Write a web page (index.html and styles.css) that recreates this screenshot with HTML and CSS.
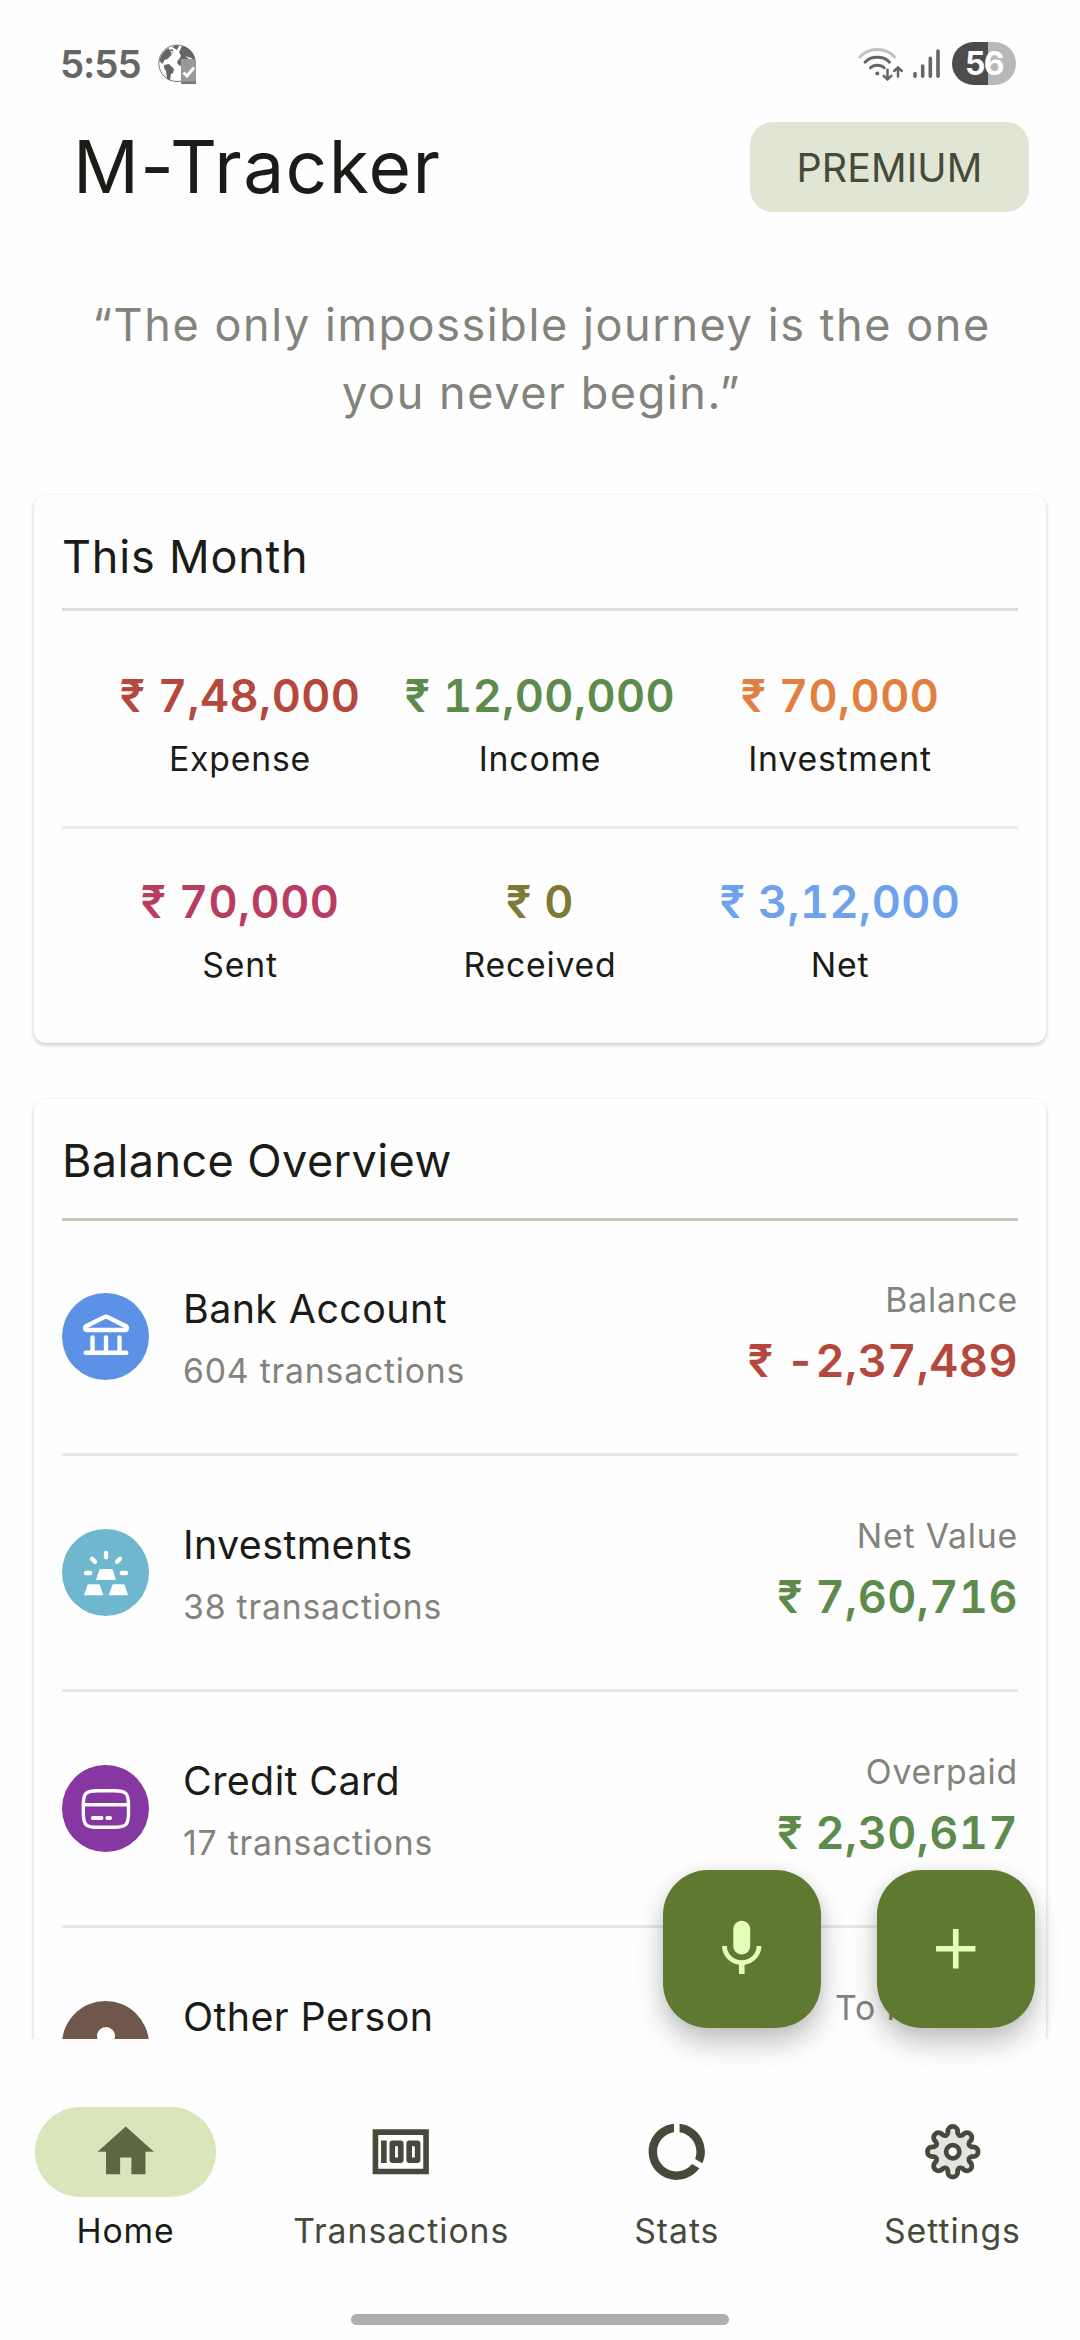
FILE: index.html
```html
<!DOCTYPE html>
<html lang="en">
<head>
    <meta charset="utf-8">
    <title>M-Tracker</title>
    <link rel="stylesheet" href="styles.css">
</head>
<body>
    <div class="screen">
        <div class="content">
            <div class="status-bar">
                <span class="time">5:55</span>
                <svg class="globe" width="40" height="40" viewBox="0 0 40 40">
                    <circle cx="19" cy="19.3" r="18.2" fill="#fefefe" stroke="#777" stroke-width="1"/>
                    <path fill="#666" d="M1.5 17c1-6 5-11 9-13l1 2 3-1 1 3-2 1v2l-4 4-3 1-2 4zM14 3l4-2 3 1-2 4-3-2zM21 8l3-6c6 1 11 5 13 12v4h-9l-8 2v-3l3-5zM6 21l5-1 5 5-1 4-2 1-1 6-3-1-1-8-2-3z"/>
                    <path fill="#666" d="M20 16l4-1 1 6-3 1-3-3z"/>
                    <path fill="#fefefe" d="M27 12l6 2 3 2-5-1zM12 7l3 0-1 2z"/>
                    <path fill="#999" d="M23 15h15v25H23z"/>
                    <path fill="#777" d="M23 37.5h15V40H23z"/>
                    <path fill="none" stroke="#fff" stroke-width="3" d="M25.5 28.5l3.5 3.5 7-8.5"/>
                </svg>
                <svg class="wifi" width="46" height="34" viewBox="0 0 46 34" fill="none" stroke="#666" stroke-width="3" stroke-linecap="round">
                    <path stroke="#c2c2c2" d="M2 10Q8.5 2.5 19.3 2.5T36.5 10"/>
                    <path d="M7 15.2Q11.5 10.3 19.3 10.3T31.5 15.2"/>
                    <path d="M12.4 20.8Q15 18.2 19.3 18.2T26.2 20.8"/>
                    <circle cx="19.3" cy="26.4" r="2" fill="#666" stroke="none"/>
                    <path stroke-width="2.5" d="M29.5 22.8v9.6M25.7 28.8l3.8 3.6 3.8-3.6M40 29.6v-9M36.2 24l3.8-3.6 3.8 3.6"/>
                </svg>
                <svg class="signal" width="28" height="30" viewBox="0 0 28 30" stroke="#666" stroke-width="3.6" stroke-linecap="round">
                    <path d="M2 24.5v2.7M9.7 17v10.2M17.3 9.2v18M25 2v25.2"/>
                </svg>
                <span class="battery">56</span>
            </div>

            <div class="header">
                <h1>M-Tracker</h1>
                <button class="premium">PREMIUM</button>
            </div>

            <p class="quote">“The only impossible journey is the one<br>you never begin.”</p>

            <div class="card month">
                <h2>This Month</h2>
                <div class="stats">
                    <div class="stat"><b class="red">₹ 7,48,000</b><span>Expense</span></div>
                    <div class="stat"><b class="green">₹ 12,00,000</b><span>Income</span></div>
                    <div class="stat"><b class="orange">₹ 70,000</b><span>Investment</span></div>
                </div>
                <div class="stats second">
                    <div class="stat"><b class="pink">₹ 70,000</b><span>Sent</span></div>
                    <div class="stat"><b class="olive">₹ 0</b><span>Received</span></div>
                    <div class="stat"><b class="blue">₹ 3,12,000</b><span>Net</span></div>
                </div>
            </div>

            <div class="card balance">
                <h2>Balance Overview</h2>
                <div class="account">
                    <svg class="account-icon bank" viewBox="0 0 87 87" fill="none" stroke="#fff" stroke-width="4.4" stroke-linecap="round" stroke-linejoin="round">
                        <path d="M25 37C22.6 37 22.6 34 24.6 33L42.3 24.1Q44 23.2 45.7 24.1L63.4 33C65.4 34 65.4 37 63 37Z"/>
                        <path d="M30.5 44.5v15M44 44.5v15M57.5 44.5v15M23.7 59.7h40.6"/>
                    </svg>
                    <div class="account-text">
                        <span class="name">Bank Account</span>
                        <span class="sub">604 transactions</span>
                    </div>
                    <div class="account-value">
                        <span class="sub">Balance</span>
                        <b class="red">₹ -2,37,489</b>
                    </div>
                </div>
                <div class="account">
                    <svg class="account-icon invest" viewBox="0 0 87 87" fill="#fff" stroke-linecap="round">
                        <path d="M38.6 40h11q1 0 1.3 1L54 50.9H34L37.3 41q.3-1 1.3-1zM26.7 55.3h10q1 0 1.3 1L41.3 66.2H22L25.4 56.3q.3-1 1.3-1zM51.5 55.3h10q1 0 1.3 1L66.1 66.2H46.8L50.2 56.3q.3-1 1.3-1z"/>
                        <path fill="none" stroke="#fff" stroke-width="4.4" d="M24 44h4.2M59.8 44H64M44 24v4.2M30 29.8l2.9 3M58 29.8l-2.9 3"/>
                    </svg>
                    <div class="account-text">
                        <span class="name">Investments</span>
                        <span class="sub">38 transactions</span>
                    </div>
                    <div class="account-value">
                        <span class="sub">Net Value</span>
                        <b class="green">₹ 7,60,716</b>
                    </div>
                </div>
                <div class="account">
                    <svg class="account-icon credit" viewBox="0 0 87 87" fill="none" stroke="#fff" stroke-width="3.4" stroke-linecap="round">
                        <path d="M21.3 40C21.3 28 24 25.7 36 25.7H52C64 25.7 66.5 28 66.5 40V48C66.5 60 64 62.3 52 62.3H36C24 62.3 21.3 60 21.3 48ZM22 39.7H66"/>
                        <path stroke-width="3.8" d="M30.8 53h8.8M45.3 53h2.8"/>
                    </svg>
                    <div class="account-text">
                        <span class="name">Credit Card</span>
                        <span class="sub">17 transactions</span>
                    </div>
                    <div class="account-value">
                        <span class="sub">Overpaid</span>
                        <b class="green">₹ 2,30,617</b>
                    </div>
                </div>
                <div class="account">
                    <svg class="account-icon person" viewBox="0 0 87 87" fill="#fff">
                        <circle cx="44" cy="35" r="9"/>
                        <path d="M26 62c0-8 8-13 18-13s18 5 18 13z"/>
                    </svg>
                    <div class="account-text">
                        <span class="name">Other Person</span>
                    </div>
                    <div class="account-value">
                        <span class="sub">To Receive</span>
                    </div>
                </div>
            </div>
        </div>

        <div class="fabs">
            <button class="fab">
                <svg class="icon" viewBox="0 0 24 24"><path d="M12 14c1.66 0 2.99-1.34 2.99-3L15 5c0-1.66-1.34-3-3-3S9 3.34 9 5v6c0 1.66 1.34 3 3 3zm5.3-3c0 3-2.54 5.1-5.3 5.1S6.7 14 6.7 11H5c0 3.41 2.72 6.23 6 6.72V21h2v-3.28c3.28-.48 6-3.3 6-6.72h-1.7z"/></svg>
            </button>
            <button class="fab">
                <svg class="icon" viewBox="0 0 24 24"><path d="M19 13h-6v6h-2v-6H5v-2h6V5h2v6h6z"/></svg>
            </button>
        </div>

        <div class="nav">
            <div class="nav-item active">
                <div class="pill"><svg class="icon" viewBox="0 0 24 24"><path d="M10 20v-6h4v6h5v-8h3L12 3 2 12h3v8z"/></svg></div>
                <span>Home</span>
            </div>
            <div class="nav-item">
                <div class="pill"><svg class="icon" viewBox="0 0 24 24"><path d="M15 16h3c.55 0 1-.45 1-1V9c0-.55-.45-1-1-1h-3c-.55 0-1 .45-1 1v6c0 .55.45 1 1 1zm1-6h1v4h-1v-4zm-7 6h3c.55 0 1-.45 1-1V9c0-.55-.45-1-1-1H9c-.55 0-1 .45-1 1v6c0 .55.45 1 1 1zm1-6h1v4h-1v-4zM5 8h2v8H5zM2 4v16h20V4H2zm18 14H4V6h16v12z"/></svg></div>
                <span>Transactions</span>
            </div>
            <div class="nav-item">
                <div class="pill"><svg class="icon" viewBox="0 0 24 24"><path d="M13 2.05v3.03c3.39.49 6 3.39 6 6.92 0 .9-.18 1.75-.48 2.54l2.6 1.53c.56-1.24.88-2.62.88-4.07 0-5.18-3.95-9.45-9-9.95zM12 19c-3.87 0-7-3.13-7-7 0-3.53 2.61-6.43 6-6.92V2.05c-5.06.5-9 4.76-9 9.95 0 5.52 4.47 10 9.99 10 3.31 0 6.24-1.61 8.06-4.09l-2.6-1.53C16.17 17.98 14.21 19 12 19z"/></svg></div>
                <span>Stats</span>
            </div>
            <div class="nav-item">
                <div class="pill">
                    <svg class="icon gear" viewBox="-12 -12 24 24">
                        <path d="M-1.75-7.25A1.75 1.75 0 0 1 1.75-7.25V-6.6Q2.2-5.35 3.43-5.9L3.89-6.36A1.75 1.75 0 0 1 6.36-3.89L5.9-3.43Q5.35-2.2 6.6-1.75H7.25A1.75 1.75 0 0 1 7.25 1.75H6.6Q5.35 2.2 5.9 3.43L6.36 3.89A1.75 1.75 0 0 1 3.89 6.36L3.43 5.9Q2.2 5.35 1.75 6.6V7.25A1.75 1.75 0 0 1-1.75 7.25V6.6Q-2.2 5.35-3.43 5.9L-3.89 6.36A1.75 1.75 0 0 1-6.36 3.89L-5.9 3.43Q-5.35 2.2-6.6 1.75H-7.25A1.75 1.75 0 0 1-7.25-1.75H-6.6Q-5.35-2.2-5.9-3.43L-6.36-3.89A1.75 1.75 0 0 1-3.89-6.36L-3.43-5.9Q-2.2-5.35-1.75-6.6Z"/>
                        <circle r="2.35"/>
                    </svg>
                </div>
                <span>Settings</span>
            </div>
        </div>
        <div class="gesture-bar"></div>
    </div>
</body>
</html>
```
FILE: styles.css
```css
* {
    box-sizing: border-box;
}

body {
    margin: 0;
    background: #fefefe;
    font-family: Inter, Roboto, sans-serif;
    color: #1b1c18;
}

h1, h2, p {
    margin: 0;
    font-weight: 400;
}

b {
    font-weight: 570;
    font-size: 45px;
    letter-spacing: 0.45px;
    font-variant-numeric: tabular-nums;
    white-space: nowrap;
}

button {
    border: 0;
    padding: 0;
    font-family: inherit;
}

.screen {
    position: relative;
    width: 1080px;
    height: 2340px;
    overflow: hidden;
}

/* scrolling part, cut off above the navigation */
.content {
    height: 2039px;
    overflow: hidden;
}

.status-bar {
    display: flex;
    align-items: center;
    height: 122px;
    padding: 5px 64px 0 60px;
    color: #666;
}

.time {
    font-size: 38.5px;
    font-weight: 600;
    letter-spacing: -1.1px;
}

.globe {
    margin-left: 17px;
}

.wifi {
    margin-left: auto;
}

.signal {
    margin-left: 9px;
}

.battery {
    width: 64px;
    height: 43px;
    margin-left: 11px;
    border-radius: 22px;
    background: linear-gradient(90deg, #4c4c4c 56%, #b8b8b8 56%);
    color: #fff;
    font-size: 32px;
    font-weight: 700;
    line-height: 43px;
    letter-spacing: -1.5px;
    text-align: center;
}

.header {
    display: flex;
    align-items: center;
    justify-content: space-between;
    height: 90px;
    padding: 0 51px 0 73px;
}

h1 {
    font-size: 73px;
    letter-spacing: 1.4px;
    line-height: 90px;
}

.premium {
    width: 279px;
    height: 90px;
    padding-top: 1px;
    border-radius: 23px;
    background: #e1e5d4;
    color: #464a3b;
    font-size: 39.4px;
    letter-spacing: 0.1px;
}

.quote {
    margin: 79px 0 68px;
    padding-left: 3px;
    color: #82837b;
    font-size: 45px;
    line-height: 68px;
    letter-spacing: 1.58px;
    text-align: center;
}

.card {
    margin: 0 34px;
    padding: 28px 28px 0;
    border-radius: 12px;
    background: #fefefe;
    box-shadow: 0 2px 4px rgba(0, 0, 0, 0.22);
}

h2 {
    font-size: 45px;
    line-height: 68px;
    letter-spacing: 0.8px;
}

.month {
    height: 548px;
}

.month h2 {
    padding-bottom: 17px;
    border-bottom: 3px solid #dedede;
}

.stats {
    display: grid;
    grid-template-columns: repeat(3, 300px);
    justify-content: center;
    height: 218px;
    padding-top: 53px;
    border-bottom: 3px solid #ebebeb;
}

.stats.second {
    height: auto;
    padding-top: 41px;
    border-bottom: 0;
}

.stat {
    display: flex;
    flex-direction: column;
    align-items: center;
    gap: 6px;
}

.stat b {
    line-height: 64px;
}

.stat span {
    font-size: 33.75px;
    line-height: 50px;
    letter-spacing: 0.8px;
}

.red { color: #b5483c; }
.green { color: #5d8b4c; }
.orange { color: #e07f40; }
.pink { color: #b93d60; }
.olive { color: #7e7936; }
.blue { color: #6fa2ec; }

.balance {
    height: 1100px;
    margin-top: 56px;
}

.balance h2 {
    padding-bottom: 23px;
    border-bottom: 3px solid #c5c8b5;
    letter-spacing: 0.4px;
}

.account {
    display: flex;
    align-items: flex-start;
    height: 236px;
    padding-top: 56px;
    border-bottom: 3px solid #e8e8e8;
}

h2 + .account {
    height: 235px;
    padding-top: 55px;
}

.account-icon {
    width: 87px;
    height: 87px;
    margin-top: 17px;
    border-radius: 50%;
}

.bank { background: #5c92e6; }
.invest { background: #6fb6cf; }
.credit { background: #8637a1; }
.person { background: #70574c; }

.account-text {
    display: flex;
    flex-direction: column;
    gap: 10px;
    margin: 5px 0 0 34px;
}

.name {
    font-size: 39.4px;
    line-height: 56px;
    letter-spacing: 0.4px;
}

.sub {
    color: #82837b;
    font-size: 33.75px;
    line-height: 48px;
    letter-spacing: 0.8px;
}

.account-value {
    display: flex;
    flex-direction: column;
    align-items: flex-end;
    gap: 7px;
    margin-left: auto;
}

.account-value b {
    line-height: 60px;
}

/* floating buttons lie over the list */
.fabs {
    position: absolute;
    top: 1870px;
    right: 45px;
    display: flex;
    gap: 56px;
}

.fab {
    display: flex;
    align-items: center;
    justify-content: center;
    width: 158px;
    height: 158px;
    border-radius: 45px;
    background: #5f7a30;
    box-shadow: 0 15px 28px rgba(0, 0, 0, 0.24), 0 0 14px rgba(0, 0, 0, 0.06);
}

.icon {
    width: 67.5px;
    height: 67.5px;
    fill: #464a3b;
}

.fab .icon {
    fill: #e5ffbb;
}

.nav {
    display: grid;
    grid-template-columns: repeat(4, 1fr);
    gap: 22.5px;
    margin: 0 1px 0 -1px;
    padding-top: 68px;
}

.nav-item {
    display: flex;
    flex-direction: column;
    align-items: center;
    gap: 10px;
    color: #464a3b;
    font-size: 33.75px;
    line-height: 48px;
    letter-spacing: 0.95px;
}

.pill {
    display: flex;
    align-items: center;
    justify-content: center;
    width: 181px;
    height: 90px;
    border-radius: 45px;
}

.active {
    color: #1b1c18;
}

.active .pill {
    background: #d8e6b9;
}

.active .icon {
    fill: #5c6842;
}

.gear path {
    fill: #e3e5e1;
    stroke: #464a3b;
    stroke-width: 1.7;
}

.gear circle {
    fill: #fefefe;
    stroke: #464a3b;
    stroke-width: 1.7;
}

.gesture-bar {
    width: 378px;
    height: 11px;
    margin: 59px auto 0;
    border-radius: 6px;
    background: #afafaf;
}
```
